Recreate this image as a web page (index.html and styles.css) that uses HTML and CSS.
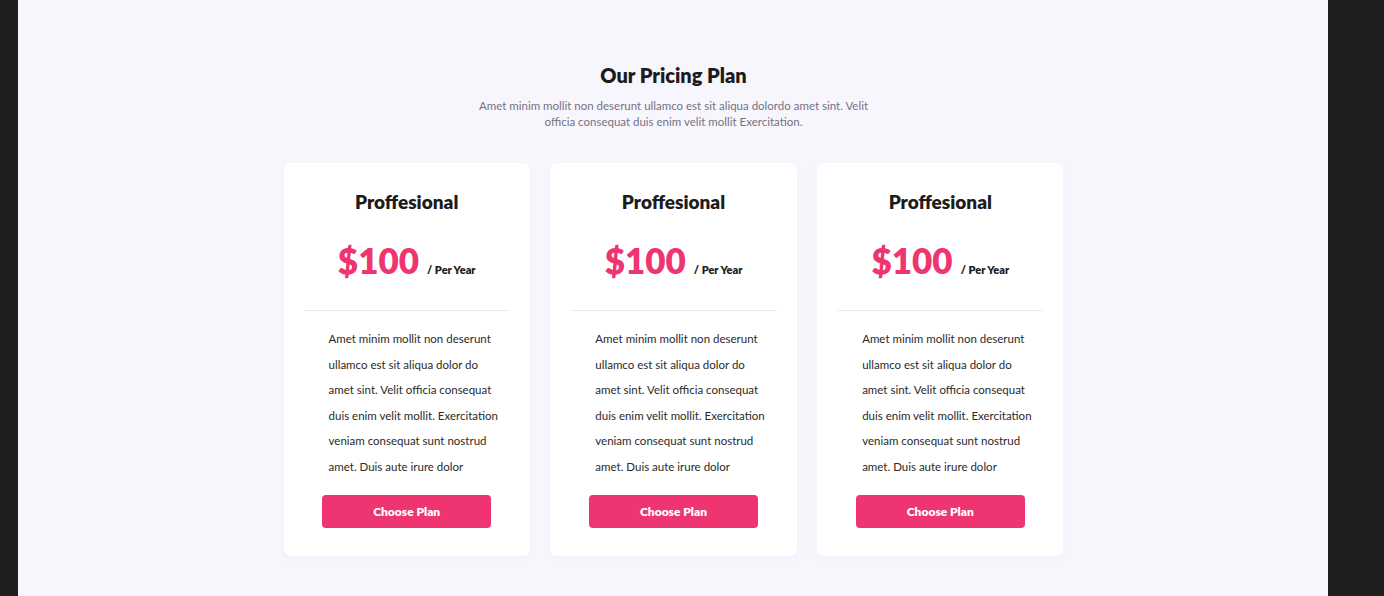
FILE: index.html
```html
<!DOCTYPE html>
<html lang="en">
<head>
<meta charset="utf-8">
<title>Our Pricing Plan</title>
<link rel="stylesheet" href="styles.css">
</head>
<body>
<div class="frame">
  <section class="pricing">
    <h2 class="title">Our Pricing Plan</h2>
    <p class="subtitle">Amet minim mollit non deserunt ullamco est sit aliqua dolordo amet sint. Velit officia consequat duis enim velit mollit Exercitation.</p>
    <div class="cards">
      <div class="card">
        <h3 class="plan">Proffesional</h3>
        <div class="price"><span class="amount">$100</span><span class="period">/ Per Year</span></div>
        <hr class="divider">
        <p class="desc">Amet minim mollit non deserunt ullamco est sit aliqua dolor do amet sint. Velit officia consequat duis enim velit mollit. Exercitation veniam consequat sunt nostrud amet. Duis aute irure dolor</p>
        <button class="btn">Choose Plan</button>
      </div>
      <div class="card">
        <h3 class="plan">Proffesional</h3>
        <div class="price"><span class="amount">$100</span><span class="period">/ Per Year</span></div>
        <hr class="divider">
        <p class="desc">Amet minim mollit non deserunt ullamco est sit aliqua dolor do amet sint. Velit officia consequat duis enim velit mollit. Exercitation veniam consequat sunt nostrud amet. Duis aute irure dolor</p>
        <button class="btn">Choose Plan</button>
      </div>
      <div class="card">
        <h3 class="plan">Proffesional</h3>
        <div class="price"><span class="amount">$100</span><span class="period">/ Per Year</span></div>
        <hr class="divider">
        <p class="desc">Amet minim mollit non deserunt ullamco est sit aliqua dolor do amet sint. Velit officia consequat duis enim velit mollit. Exercitation veniam consequat sunt nostrud amet. Duis aute irure dolor</p>
        <button class="btn">Choose Plan</button>
      </div>
    </div>
  </section>
</div>
</body>
</html>
```
FILE: styles.css
```css
html, body {
  margin: 0;
  padding: 0;
  height: 100%;
}
body {
  background: #1f1f1f;
  font-family: "Lato", "Noto Sans", sans-serif;
  overflow: hidden;
}
.frame {
  margin-left: 18px;
  width: 1310px;
  height: 596px;
  background: #f8f6fd;
}
.pricing {
  display: flex;
  flex-direction: column;
  align-items: center;
  padding-top: 62px;
  padding-left: 1px;
}
.title {
  margin: 0;
  font-size: 20px;
  font-weight: 800;
  color: #1c1c1c;
  line-height: 26px;
}
.subtitle {
  margin: 10px 0 0;
  width: 392px;
  text-align: center;
  font-size: 11.5px;
  line-height: 16px;
  color: #757185;
}
.cards {
  display: flex;
  gap: 20.5px;
  margin-top: 33px;
}
.card {
  width: 246.3px;
  height: 393px;
  box-sizing: border-box;
  background: #ffffff;
  border-radius: 7px;
  box-shadow: 0 2px 6px rgba(60, 40, 120, 0.04);
  display: flex;
  flex-direction: column;
  align-items: center;
  padding: 26px 20px 0;
}
.plan {
  margin: 0;
  font-size: 19px;
  font-weight: 800;
  color: #1c1c1c;
  line-height: 26px;
}
.price {
  margin-top: 24px;
  display: flex;
  align-items: baseline;
  gap: 8px;
  height: 50px;
}
.amount {
  font-size: 35px;
  font-weight: 800;
  color: #ef3570;
}
.period {
  font-size: 11px;
  font-weight: 800;
  color: #1c1c1c;
}
.divider {
  align-self: stretch;
  margin: 21px 0 0;
  border: 0;
  border-top: 1px solid #ececf0;
}
.desc {
  margin: 15px 0 0 25px;
  align-self: flex-start;
  width: 174px;
  font-size: 11.5px;
  line-height: 25.5px;
  color: #2a2a2a;
}
.btn {
  margin-top: 16px;
  width: 169px;
  height: 33px;
  border: 0;
  border-radius: 4px;
  background: #ef3571;
  color: #ffffff;
  font-family: inherit;
  font-size: 12px;
  font-weight: 800;
  cursor: pointer;
}
```
